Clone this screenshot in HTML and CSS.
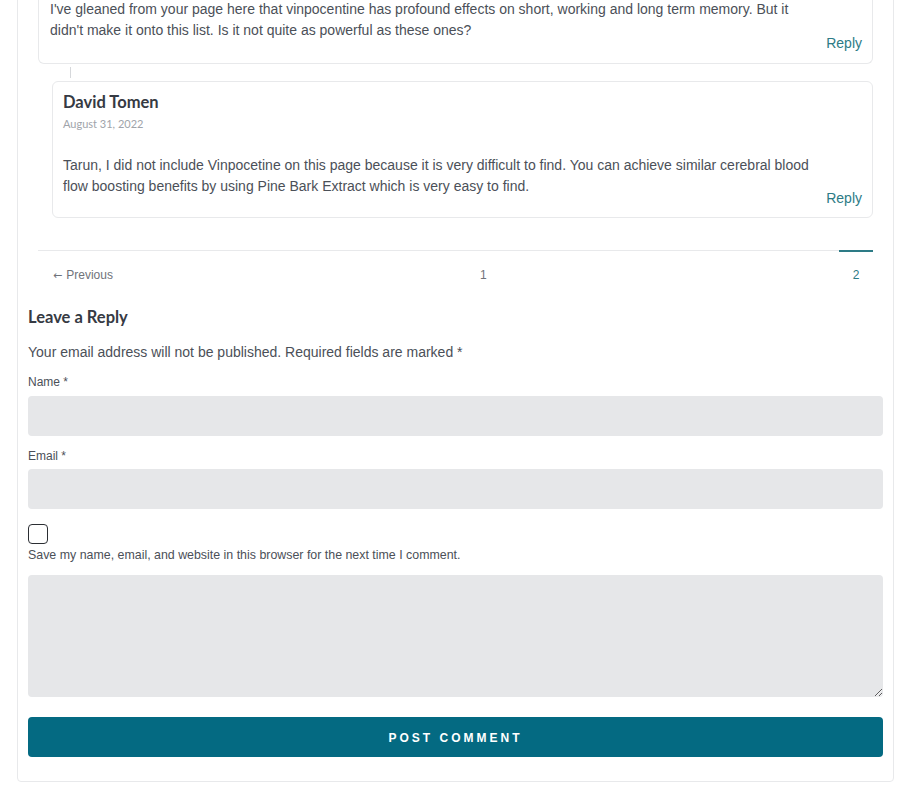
FILE: index.html
```html
<!DOCTYPE html>
<html lang="en">
<head>
<meta charset="utf-8">
<title>Comments</title>
<link rel="stylesheet" href="styles.css">
</head>
<body>
<div class="page">
  <div class="comments">
    <div class="card card-first">
      <p class="text">I've gleaned from your page here that vinpocentine has profound effects on short, working and long term memory. But it didn't make it onto this list. Is it not quite as powerful as these ones?</p>
      <div class="reply"><a href="#">Reply</a></div>
    </div>
    <div class="thread"><span class="thread-line"></span></div>
    <div class="card card-child">
      <div class="author">David Tomen</div>
      <div class="date">August 31, 2022</div>
      <p class="text text-child">Tarun, I did not include Vinpocetine on this page because it is very difficult to find. You can achieve similar cerebral blood flow boosting benefits by using Pine Bark Extract which is very easy to find.</p>
      <div class="reply reply-child"><a href="#">Reply</a></div>
    </div>
    <nav class="pager">
      <a class="pg pg-prev" href="#"><span class="arrow">←</span>Previous</a>
      <a class="pg" href="#">1</a>
      <span class="pg pg-current">2</span>
    </nav>
  </div>
  <form class="respond">
    <h3 class="respond-title">Leave a Reply</h3>
    <p class="notes">Your email address will not be published. Required fields are marked *</p>
    <label class="lbl" for="name">Name *</label>
    <input class="field" id="name" type="text">
    <label class="lbl lbl-email" for="email">Email *</label>
    <input class="field field-email" id="email" type="email">
    <input class="check" type="checkbox" id="save">
    <label class="save-lbl" for="save">Save my name, email, and website in this browser for the next time I comment.</label>
    <textarea class="area"></textarea>
    <button class="submit" type="button">POST COMMENT</button>
  </form>
</div>
</body>
</html>
```
FILE: styles.css
```css
* { box-sizing: border-box; }
html, body { margin: 0; padding: 0; background: #fff; }
body {
  font-family: "Liberation Sans", Arial, sans-serif;
  color: #4b5058;
  overflow: hidden;
}
.page {
  width: 877px;
  margin: -30px 0 0 17px;
  border: 1px solid #e8e9eb;
  border-radius: 0 0 4px 4px;
  padding: 0 10px 24px;
}
.comments { margin: 0 10px; }
.card {
  border: 1px solid #e8e9eb;
  border-radius: 6px;
  padding: 0 10px 10px 11px;
}
.card-first { padding-top: 27px; border-top-color: transparent; }
.text {
  margin: 0;
  padding-right: 50px;
  font-size: 14px;
  line-height: 21px;
}
.reply {
  text-align: right;
  font-size: 14px;
  line-height: 20px;
  margin-top: -8px;
}
.reply a { color: #2d7b86; text-decoration: none; }
.thread { height: 17px; padding: 3px 0 0 32px; }
.thread-line { display: block; width: 1px; height: 11px; background: #d6d8db; }
.card-child { margin-left: 14px; padding-left: 10px; padding-top: 9px; padding-bottom: 9px; }
.card-child .text { padding-right: 40px; }
.reply-child { margin-top: -9px; }
.author {
  font-family: Lato, "Noto Sans", sans-serif;
  font-weight: 700;
  font-size: 16.5px;
  line-height: 22px;
  color: #363a43;
}
.date {
  font-family: Lato, "Noto Sans", sans-serif;
  font-size: 11px;
  line-height: 16px;
  color: #a0a4aa;
  margin-top: 3px;
}
.text-child { margin-top: 23px; }
.pager {
  margin-top: 32px;
  border-top: 1px solid #e8e9eb;
  display: flex;
  justify-content: space-between;
}
.pg {
  margin-top: -1px;
  border-top: 2px solid transparent;
  padding: 14px 15px 0;
  height: 34px;
  font-size: 12px;
  line-height: 18px;
  color: #6f737a;
  text-decoration: none;
  min-width: 34px;
  text-align: center;
}
.arrow { font-family: "DejaVu Sans", sans-serif; font-size: 11px; line-height: 1; margin-right: 4px; }
.pg-current { border-top-color: #2d7b86; color: #2d7b86; padding: 14px 0 0; }
.respond { display: flex; flex-direction: column; align-items: flex-start; }
.respond-title {
  margin: 22px 0 0;
  font-family: Lato, "Noto Sans", sans-serif;
  font-weight: 700;
  font-size: 16.5px;
  line-height: 22px;
  color: #363a43;
}
.notes { margin: 14px 0 0; font-size: 14px; line-height: 20px; }
.lbl { margin-top: 12px; font-size: 12px; line-height: 16px; color: #4b5058; }
.field, .area {
  display: block;
  width: 100%;
  border: none;
  border-radius: 4px;
  background: #e6e7e9;
  font: inherit;
}
.field { height: 40px; margin-top: 6px; }
.lbl-email { margin-top: 12px; }
.field-email { margin-top: 5px; }
.check {
  appearance: none;
  -webkit-appearance: none;
  width: 20px;
  height: 20px;
  margin: 15px 0 0;
  border: 1.5px solid #2b2e33;
  border-radius: 4px;
  background: #fff;
}
.save-lbl { margin-top: 3px; font-size: 12.4px; line-height: 16px; }
.area { height: 122px; margin-top: 12px; resize: vertical; }
.submit {
  width: 100%;
  height: 40px;
  margin-top: 20px;
  padding-top: 2px;
  border: none;
  border-radius: 4px;
  background: #046a82;
  color: #fff;
  font-family: "Liberation Sans", Arial, sans-serif;
  font-weight: 700;
  font-size: 12px;
  letter-spacing: 3px;
}
```
